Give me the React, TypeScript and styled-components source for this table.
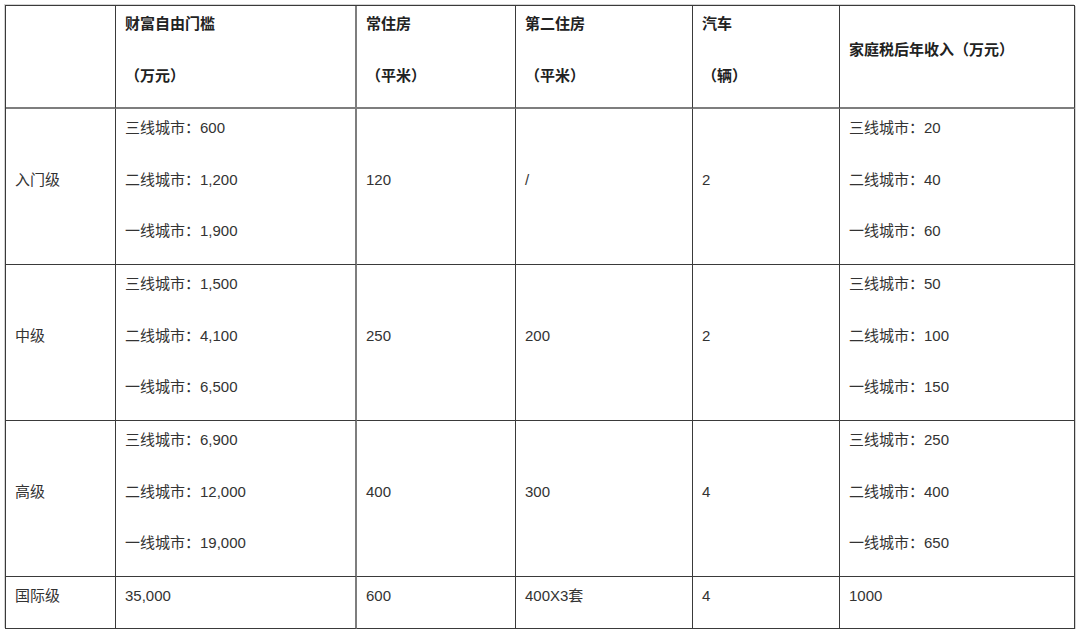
import React from 'react';
import styled, { createGlobalStyle } from 'styled-components';

const GlobalStyle = createGlobalStyle`
    html, body {
        margin: 0;
        padding: 0;
        background: #fff;
    }
    body {
        font-family: "Liberation Sans", "Noto Sans CJK SC", sans-serif;
        font-size: 15px;
        color: #333;
    }
`

const Page = styled.div`
    padding: 5px 0 0 5px;
`

const Grid = styled.div`
    display: grid;
    width: max-content;
    grid-template-columns: 110px 241px 159px 177px 147px 235px;
    grid-template-rows: 103px 156px 156px 156px 52px;
    border-top: 1px solid #3a3a3a;
    border-left: 1px solid #3a3a3a;
    box-shadow: -1px -1px 0 0 #d4d4d4, 1px 1px 0 0 #d4d4d4;
`

const Cell = styled.div<{ $head?: boolean; $thick?: boolean }>`
    display: flex;
    flex-direction: column;
    justify-content: center;
    box-sizing: border-box;
    padding: 0 9px;
    border-right: ${(p) => (p.$thick ? '2px solid #7e7e7e' : '1px solid #3a3a3a')};
    border-bottom: ${(p) => (p.$head ? '2px solid #7e7e7e' : '1px solid #3a3a3a')};
    font-weight: ${(p) => (p.$head ? 700 : 400)};
    color: ${(p) => (p.$head ? '#222' : '#333')};
`

const Line = styled.p`
    margin: 0 0 13.5px;
    line-height: 38px;
    white-space: nowrap;
`

const headers: string[][] = [
    [],
    ['财富自由门槛', '（万元）'],
    ['常住房', '（平米）'],
    ['第二住房', '（平米）'],
    ['汽车', '（辆）'],
    ['家庭税后年收入（万元）'],
]

const rows: string[][][] = [
    [
        ['入门级'],
        ['三线城市：600', '二线城市：1,200', '一线城市：1,900'],
        ['120'],
        ['/'],
        ['2'],
        ['三线城市：20', '二线城市：40', '一线城市：60'],
    ],
    [
        ['中级'],
        ['三线城市：1,500', '二线城市：4,100', '一线城市：6,500'],
        ['250'],
        ['200'],
        ['2'],
        ['三线城市：50', '二线城市：100', '一线城市：150'],
    ],
    [
        ['高级'],
        ['三线城市：6,900', '二线城市：12,000', '一线城市：19,000'],
        ['400'],
        ['300'],
        ['4'],
        ['三线城市：250', '二线城市：400', '一线城市：650'],
    ],
    [
        ['国际级'],
        ['35,000'],
        ['600'],
        ['400X3套'],
        ['4'],
        ['1000'],
    ],
]

export default function App() {
    return (
        <Page>
            <GlobalStyle />
            <Grid>
                {headers.map((lines, i) => (
                    <Cell key={'h' + i} $head $thick={i === 1}>
                        {lines.map((t) => <Line key={t}>{t}</Line>)}
                    </Cell>
                ))}
                {rows.map((row, r) =>
                    row.map((lines, i) => (
                        <Cell key={r + '-' + i} $thick={i === 1}>
                            {lines.map((t) => <Line key={t}>{t}</Line>)}
                        </Cell>
                    ))
                )}
            </Grid>
        </Page>
    )
}
